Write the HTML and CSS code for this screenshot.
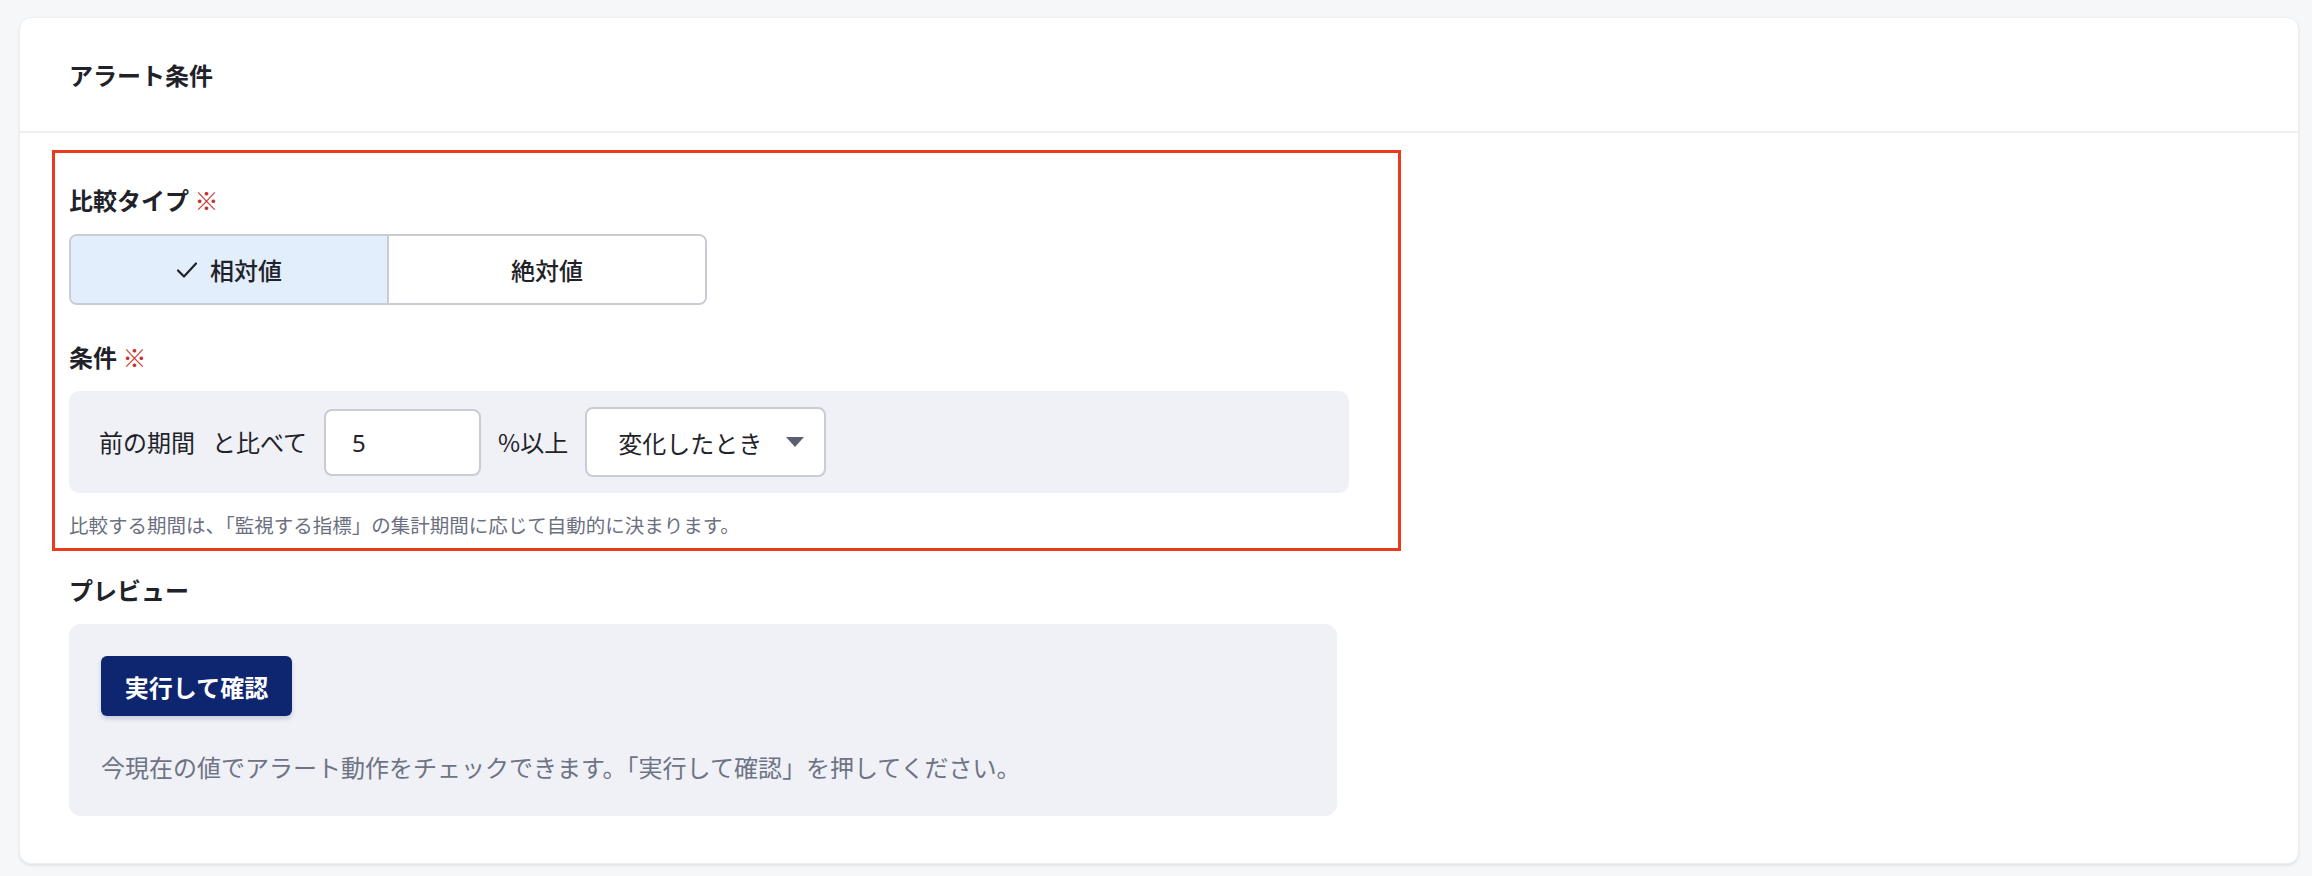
FILE: index.html
```html
<!DOCTYPE html>
<html lang="ja">
<head>
<meta charset="utf-8">
<title>アラート条件</title>
<link rel="stylesheet" href="styles.css">
</head>
<body>
<section class="card">
  <header class="card-header">
    <h2 class="card-title">アラート条件</h2>
  </header>
  <div class="card-body">
    <div class="highlight">
      <div class="field-label">比較タイプ <span class="req">※</span></div>
      <div class="segmented">
        <button class="seg seg-active">
          <svg class="check" width="22" height="18" viewBox="0 0 22 18"><path d="M2 9.5 L8 15.5 L20 2.5" fill="none" stroke="#1f2329" stroke-width="2.2" stroke-linecap="round" stroke-linejoin="round"/></svg>
          <span>相対値</span>
        </button>
        <button class="seg">絶対値</button>
      </div>

      <div class="field-label label-cond">条件 <span class="req">※</span></div>
      <div class="cond-box">
        <span class="cond-text">前の期間</span>
        <span class="cond-text">と比べて</span>
        <div class="num-input">5</div>
        <span class="cond-text">%以上</span>
        <div class="select">
          <span>変化したとき</span>
          <svg class="caret" width="18" height="10" viewBox="0 0 18 10"><path d="M0 0 H18 L9 10 Z" fill="#5a5f73"/></svg>
        </div>
      </div>
      <p class="helper">比較する期間は、「監視する指標」の集計期間に応じて自動的に決まります。</p>
    </div>

    <div class="field-label label-preview">プレビュー</div>
    <div class="preview-box">
      <button class="run-btn">実行して確認</button>
      <p class="preview-desc">今現在の値でアラート動作をチェックできます。「実行して確認」を押してください。</p>
    </div>
  </div>
</section>
</body>
</html>
```

FILE: styles.css
```css
* { box-sizing: border-box; }

html, body {
  margin: 0;
  padding: 0;
  background: #f6f7f9;
}

body {
  font-family: "Noto Sans CJK JP", "Noto Sans", sans-serif;
  color: #1f2329;
  padding: 17px 13px 12px 19px;
}

.card {
  background: #ffffff;
  border: 1px solid #eceef1;
  border-radius: 12px;
  box-shadow: 0 2px 3px rgba(0, 0, 0, 0.08);
  height: 847px;
}

.card-header {
  height: 115px;
  border-bottom: 2px solid #eef0f4;
  display: flex;
  align-items: center;
  padding: 0 49px;
}

.card-title {
  margin: 0;
  font-size: 24px;
  font-weight: 700;
  line-height: 36px;
  color: #1f2329;
}

.card-body {
  padding: 17px 49px 48px 49px;
}

.highlight {
  width: 1349px;
  margin-left: -17px;
  border: 3px solid #ea3a1c;
  padding: 29px 14px 8px 14px;
}

.field-label {
  font-size: 24px;
  font-weight: 700;
  line-height: 36px;
  color: #1f2329;
}

.req {
  color: #c4302b;
  font-weight: 400;
  font-size: 24px;
}

.segmented {
  margin-top: 16px;
  display: flex;
  width: 638px;
  height: 71px;
  border: 2px solid #c9ccd4;
  border-radius: 8px;
  overflow: hidden;
}

.seg {
  flex: 1;
  display: flex;
  align-items: center;
  justify-content: center;
  gap: 12px;
  border: none;
  background: #ffffff;
  font-family: inherit;
  font-size: 24px;
  font-weight: 500;
  color: #1f2329;
  padding: 0;
  margin: 0;
}

.seg + .seg {
  border-left: 2px solid #c9ccd4;
}

.seg-active {
  background: #e2eefb;
}

.check { display: block; }

.label-cond {
  margin-top: 34px;
}

.cond-box {
  margin-top: 16px;
  width: 1280px;
  height: 102px;
  background: #eff1f6;
  border-radius: 10px;
  display: flex;
  align-items: center;
  padding: 0 30px;
  gap: 17px;
}

.cond-text {
  font-size: 24px;
  line-height: 36px;
  color: #1f2329;
}

.num-input {
  width: 157px;
  height: 67px;
  background: #ffffff;
  border: 2px solid #c9ccd4;
  border-radius: 8px;
  display: flex;
  align-items: center;
  padding-left: 26px;
  font-family: "Noto Sans", "Noto Sans CJK JP", sans-serif;
  font-size: 24px;
  color: #1f2329;
}

.select {
  width: 241px;
  height: 70px;
  background: #ffffff;
  border: 2px solid #c9ccd4;
  border-radius: 8px;
  display: flex;
  align-items: center;
  justify-content: space-between;
  padding: 0 20px 0 31px;
  font-size: 24px;
  color: #1f2329;
}

.caret { display: block; }

.helper {
  margin: 17px 0 0 0;
  font-size: 19.5px;
  line-height: 30px;
  color: #6b7080;
}

.label-preview {
  margin-top: 21px;
}

.preview-box {
  margin-top: 16px;
  width: 1268px;
  height: 192px;
  background: #eff1f6;
  border-radius: 12px;
  padding: 32px;
}

.run-btn {
  display: block;
  width: 191px;
  height: 60px;
  background: #0e2670;
  color: #ffffff;
  border: none;
  border-radius: 6px;
  box-shadow: 0 3px 4px rgba(14, 38, 112, 0.18);
  font-family: inherit;
  font-size: 24px;
  font-weight: 700;
  padding: 0;
}

.preview-desc {
  margin: 33px 0 0 0;
  font-size: 24px;
  line-height: 36px;
  color: #6e7385;
}
```
